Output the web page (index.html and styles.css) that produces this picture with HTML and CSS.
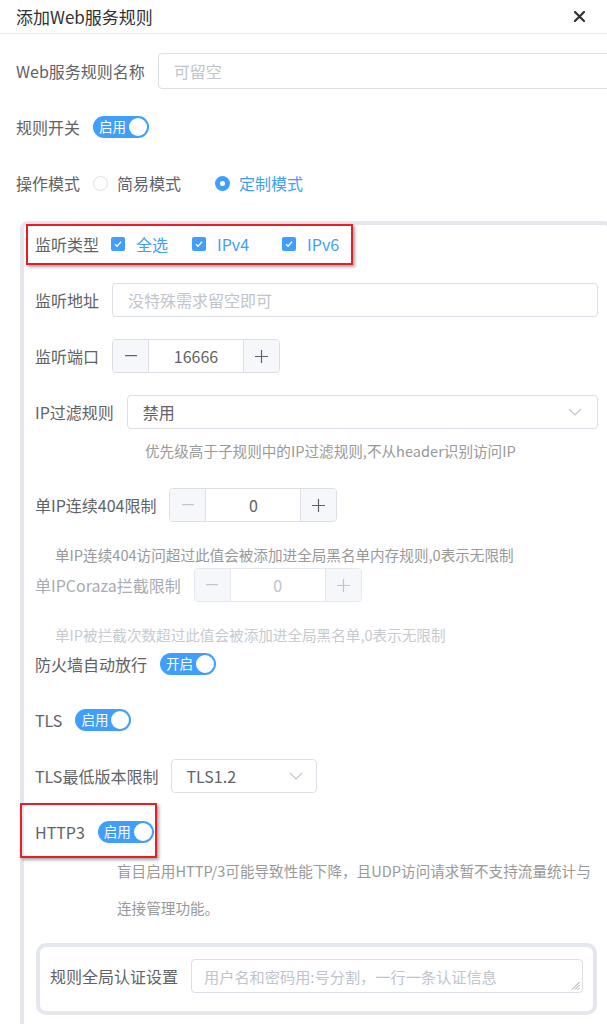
FILE: index.html
```html
<!DOCTYPE html>
<html lang="zh-CN">
<head>
<meta charset="utf-8">
<title>添加Web服务规则</title>
<link rel="stylesheet" href="styles.css">
</head>
<body>
<div class="dialog">
  <div class="header">
    <span class="title">添加Web服务规则</span>
    <svg class="close" width="11" height="11" viewBox="0 0 11 11"><path d="M1 1L10 10M10 1L1 10" stroke="#303133" stroke-width="2.2" stroke-linecap="round"/></svg>
  </div>
  <div class="form">
    <div class="row">
      <span class="label">Web服务规则名称</span>
      <div class="input input-name"><span class="ph">可留空</span></div>
    </div>
    <div class="row">
      <span class="label">规则开关</span>
      <span class="switch"><span class="sw-text">启用</span><span class="knob"></span></span>
    </div>
    <div class="row">
      <span class="label">操作模式</span>
      <span class="radio"><span class="radio-dot"></span>简易模式</span>
      <span class="radio checked"><span class="radio-dot"></span>定制模式</span>
    </div>

    <div class="panel">
      <div class="prow">
        <span class="label">监听类型</span>
        <span class="check check-all"><svg width="14" height="14" viewBox="0 0 14 14"><rect width="14" height="14" rx="2" fill="#409eff"/><path d="M4 7.2L6.1 9.2L10 4.8" fill="none" stroke="#fff" stroke-width="1.3"/></svg>全选</span>
        <span class="check check-v4"><svg width="14" height="14" viewBox="0 0 14 14"><rect width="14" height="14" rx="2" fill="#409eff"/><path d="M4 7.2L6.1 9.2L10 4.8" fill="none" stroke="#fff" stroke-width="1.3"/></svg>IPv4</span>
        <span class="check"><svg width="14" height="14" viewBox="0 0 14 14"><rect width="14" height="14" rx="2" fill="#409eff"/><path d="M4 7.2L6.1 9.2L10 4.8" fill="none" stroke="#fff" stroke-width="1.3"/></svg>IPv6</span>
      </div>
      <div class="prow">
        <span class="label">监听地址</span>
        <div class="input grow"><span class="ph">没特殊需求留空即可</span></div>
      </div>
      <div class="prow">
        <span class="label">监听端口</span>
        <div class="stepper">
          <span class="sbtn minus"><svg width="12" height="2" viewBox="0 0 12 2"><rect width="12" height="1.2" fill="currentColor"/></svg></span>
          <span class="sval">16666</span>
          <span class="sbtn plus"><svg width="13" height="13" viewBox="0 0 13 13"><path d="M6.5 0V13M0 6.5H13" stroke="currentColor" stroke-width="1.2"/></svg></span>
        </div>
      </div>
      <div class="prow tight">
        <span class="label">IP过滤规则</span>
        <div class="select grow"><span class="sel-text">禁用</span><svg class="chev" width="14" height="8" viewBox="0 0 14 8"><path d="M1 1L7 7L13 1" fill="none" stroke="#c0c4cc" stroke-width="1.1"/></svg></div>
      </div>
      <div class="help help-ip">优先级高于子规则中的IP过滤规则,不从header识别访问IP</div>
      <div class="prow tight">
        <span class="label">单IP连续404限制</span>
        <div class="stepper">
          <span class="sbtn minus off"><svg width="12" height="2" viewBox="0 0 12 2"><rect width="12" height="1.2" fill="currentColor"/></svg></span>
          <span class="sval">0</span>
          <span class="sbtn plus"><svg width="13" height="13" viewBox="0 0 13 13"><path d="M6.5 0V13M0 6.5H13" stroke="currentColor" stroke-width="1.2"/></svg></span>
        </div>
      </div>
      <div class="help help-404">单IP连续404访问超过此值会被添加进全局黑名单内存规则,0表示无限制</div>
      <div class="prow tight">
        <span class="label dim">单IPCoraza拦截限制</span>
        <div class="stepper disabled">
          <span class="sbtn minus"><svg width="12" height="2" viewBox="0 0 12 2"><rect width="12" height="1.2" fill="currentColor"/></svg></span>
          <span class="sval">0</span>
          <span class="sbtn plus"><svg width="13" height="13" viewBox="0 0 13 13"><path d="M6.5 0V13M0 6.5H13" stroke="currentColor" stroke-width="1.2"/></svg></span>
        </div>
      </div>
      <div class="help help-coraza">单IP被拦截次数超过此值会被添加进全局黑名单,0表示无限制</div>
      <div class="prow">
        <span class="label">防火墙自动放行</span>
        <span class="switch"><span class="sw-text">开启</span><span class="knob"></span></span>
      </div>
      <div class="prow">
        <span class="label">TLS</span>
        <span class="switch"><span class="sw-text">启用</span><span class="knob"></span></span>
      </div>
      <div class="prow">
        <span class="label">TLS最低版本限制</span>
        <div class="select select-tls"><span class="sel-text">TLS1.2</span><svg class="chev" width="14" height="8" viewBox="0 0 14 8"><path d="M1 1L7 7L13 1" fill="none" stroke="#c0c4cc" stroke-width="1.1"/></svg></div>
      </div>
      <div class="prow tight">
        <span class="label">HTTP3</span>
        <span class="switch"><span class="sw-text">启用</span><span class="knob"></span></span>
      </div>
      <div class="help help-h3">盲目启用HTTP/3可能导致性能下降，且UDP访问请求暂不支持流量统计与<br>连接管理功能。</div>
      <div class="inner">
        <span class="label">规则全局认证设置</span>
        <div class="textarea grow"><span class="ph">用户名和密码用:号分割，一行一条认证信息</span>
          <svg class="grip" width="9" height="9" viewBox="0 0 9 9"><path d="M8.5 1L1 8.5M8.5 4L4 8.5M8.5 7L7 8.5" stroke="#909399" stroke-width="0.9"/></svg>
        </div>
      </div>
    </div>
  </div>
  <div class="mark mark1"></div>
  <div class="mark mark2"></div>
</div>
</body>
</html>
```

FILE: styles.css
```css
* { box-sizing: border-box; }
html, body { margin: 0; padding: 0; background: #fff; }
body {
  width: 607px;
  height: 1024px;
  overflow: hidden;
  font-family: "Noto Sans CJK SC", "Noto Sans", sans-serif;
  font-size: 16px;
  color: #606266;
}
.dialog { position: relative; width: 607px; height: 1024px; overflow: hidden; }

.header {
  height: 34px;
  border-bottom: 1px solid #e8eaef;
  display: flex;
  align-items: center;
  justify-content: space-between;
  padding: 0 22px 1px 16px;
}
.title { font-size: 17px; color: #303133; line-height: 1; }
.close { display: block; }

.form { padding: 19px 0 0 16px; }
.row { display: flex; align-items: center; height: 36px; margin-bottom: 20px; }
.label { padding-right: 13px; white-space: nowrap; color: #606266; line-height: 1; }
.label.dim { color: #a8abb2; }

.input, .select, .textarea {
  height: 34px;
  border: 1px solid #dcdfe6;
  border-radius: 4px;
  display: flex;
  align-items: center;
  padding: 0 15px;
  background: #fff;
}
.input-name { height: 36px; width: 480px; flex: none; }
.grow { flex: 1; }
.ph { color: #c0c4cc; white-space: nowrap; }

.switch {
  display: inline-flex;
  align-items: center;
  justify-content: space-between;
  width: 56px;
  height: 22px;
  border-radius: 11px;
  background: #409eff;
  padding: 0 2px 0 6px;
}
.sw-text { color: #fff; font-size: 13.5px; line-height: 1; }
.knob { width: 18px; height: 18px; border-radius: 50%; background: #fff; }

.radio { display: inline-flex; align-items: center; margin-right: 34px; color: #606266; }
.radio-dot {
  width: 15px; height: 15px; border-radius: 50%;
  border: 1px solid #dcdfe6; margin-right: 9px; background: #fff;
}
.radio.checked { color: #409eff; }
.radio.checked .radio-dot { border: 5px solid #409eff; background: #fff; }

.panel {
  margin: 1px 0 0 4px;
  width: 592px;
  border: 4px solid #e4e7ed;
  border-radius: 8px;
  padding: 2px 10px 40px 11px;
}
.prow { display: flex; align-items: center; height: 34px; margin-bottom: 22px; }
.prow.tight { margin-bottom: 0; }

.check { display: inline-flex; align-items: center; color: #409eff; }
.check svg { margin-right: 11px; }
.check-all { margin-left: -1px; margin-right: 24px; }
.check-v4 { margin-right: 33px; }

.stepper {
  display: flex;
  width: 168px;
  height: 34px;
  border: 1px solid #dcdfe6;
  border-radius: 4px;
  overflow: hidden;
}
.sbtn {
  width: 36px;
  background: #f5f7fa;
  display: flex; align-items: center; justify-content: center;
  color: #606266;
}
.sbtn.minus { border-right: 1px solid #dcdfe6; }
.sbtn.plus { border-left: 1px solid #dcdfe6; }
.sbtn.off { color: #c0c4cc; }
.sval { flex: 1; display: flex; align-items: center; justify-content: center; color: #606266; }
.stepper.disabled { border-color: #e4e7ed; }
.stepper.disabled .sbtn { color: #c0c4cc; border-color: #e4e7ed; }
.stepper.disabled .sval { color: #c0c4cc; }

.select { justify-content: space-between; }
.sel-text { color: #606266; }
.select-tls { width: 146px; padding: 0 13px 0 14px; }
.chev { display: block; }

.help { font-size: 14.6px; color: #999; line-height: 24px; white-space: nowrap; }
.help-ip { margin: 10px 0 25px; padding-left: 110px; }
.help-404 { margin: 21px 0 1px; padding-left: 20px; }
.help-coraza { margin: 21px 0 0; padding-left: 20px; color: #c8cacf; }
.help-h3 { margin: 3px 0 17px; padding-left: 82px; line-height: 37px; }

.inner {
  display: flex;
  align-items: center;
  margin-left: 1px;
  width: 561px;
  border: 4px solid #e4e7ed;
  border-radius: 10px;
  padding: 12px 10px 18px 10px;
}
.inner .label { color: #606266; }
.textarea { position: relative; padding: 0 12px; }
.textarea .ph { font-size: 15.2px; }
.grip { position: absolute; right: 2px; bottom: 2px; }

.mark {
  position: absolute;
  border: 2px solid #ec1c24;
  box-shadow: 2px 2px 3px rgba(0, 0, 0, 0.35);
}
.mark1 { left: 26px; top: 224px; width: 327px; height: 41px; }
.mark2 { left: 20px; top: 803px; width: 137px; height: 55px; }
```
